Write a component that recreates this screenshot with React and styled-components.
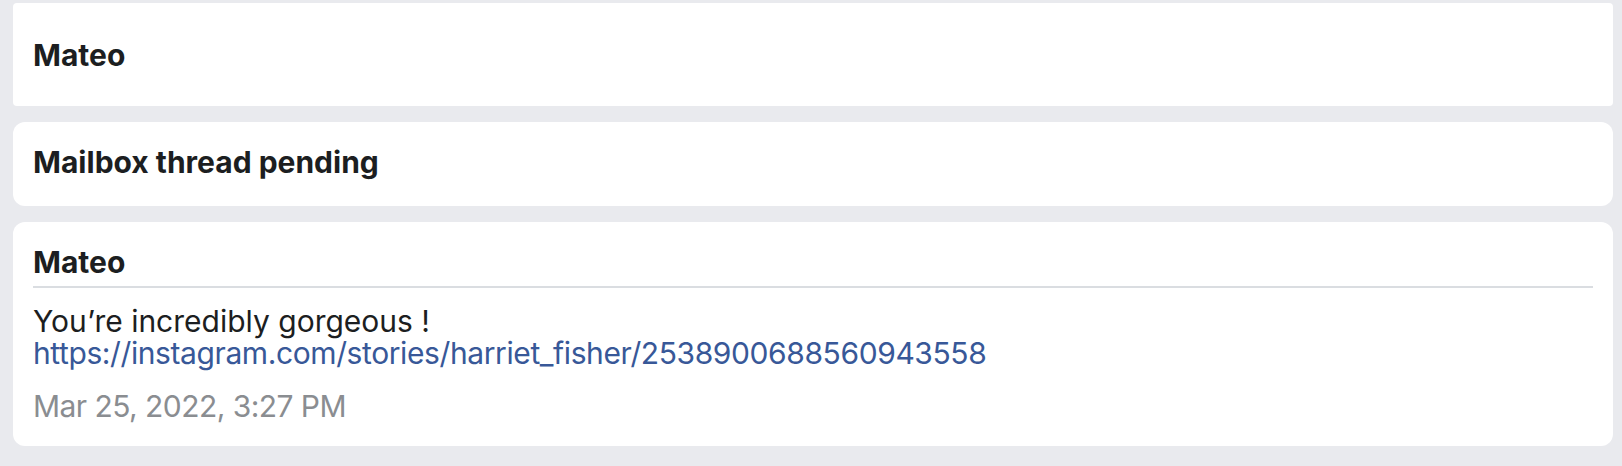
import React from 'react';
import styled, { createGlobalStyle } from 'styled-components';

const GlobalStyle = createGlobalStyle`
  html, body {
    margin: 0;
    padding: 0;
    background: #e9eaee;
  }
  body {
    font-family: Inter, "Liberation Sans", Arial, sans-serif;
    -webkit-font-smoothing: antialiased;
  }
`;

const Page = styled.div`
  min-height: 466px;
  box-sizing: border-box;
  padding: 3px 9px 20px 13px;
  display: flex;
  flex-direction: column;
  gap: 16px;
  background: #e9eaee;
`;

const Card = styled.section`
  background: #ffffff;
  border-radius: ${(p) => (p.$clipped ? '4px' : '12px')};
  padding: ${(p) => (p.$clipped ? '32px 20px 31px' : '20px 20px 24px')};
`;

const Title = styled.h3`
  margin: 0;
  font-size: 30px;
  line-height: 40px;
  font-weight: 700;
  color: #1c1e21;
  ${(p) =>
    p.$divided &&
    `
    padding-bottom: 4px;
    border-bottom: 2px solid #dadde1;
  `}
`;

const Body = styled.p`
  margin: 17px 0 0;
  font-size: 30px;
  line-height: 32px;
  font-weight: 400;
  color: #1c1e21;
`;

const Link = styled.a`
  display: block;
  color: #385898;
  text-decoration: none;
  letter-spacing: -0.4px;
`;

const Timestamp = styled.div`
  margin-top: 21px;
  font-size: 30px;
  line-height: 32px;
  letter-spacing: -0.55px;
  color: #8a8d91;
`;

export default function App() {
  return (
    <>
      <GlobalStyle />
      <Page>
        <Card $clipped>
          <Title>Mateo</Title>
        </Card>
        <Card>
          <Title>Mailbox thread pending</Title>
        </Card>
        <Card>
          <Title $divided>Mateo</Title>
          <Body>
            You’re incredibly gorgeous !
            <Link href="#">https://instagram.com/stories/harriet_fisher/2538900688560943558</Link>
          </Body>
          <Timestamp>Mar 25, 2022, 3:27 PM</Timestamp>
        </Card>
      </Page>
    </>
  );
}
